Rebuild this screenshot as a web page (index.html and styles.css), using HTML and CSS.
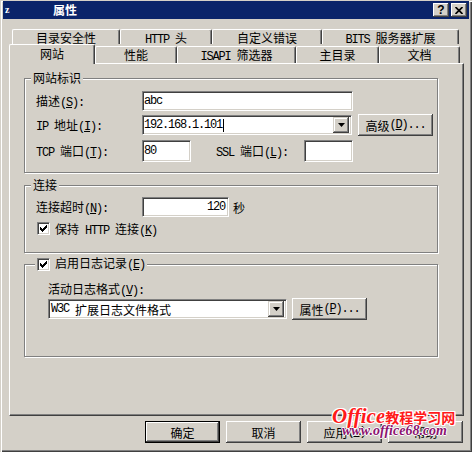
FILE: index.html
```html
<!DOCTYPE html>
<html lang="zh-CN">
<head>
<meta charset="utf-8">
<title>属性</title>
<link rel="stylesheet" href="styles.css">
</head>
<body>
<div class="window">
  <div class="titlebar">
    <span class="ticon">z</span>
    <span class="ttext">属性</span>
    <span class="tbtns">
      <span class="cbtn help">?</span>
      <span class="cbtn close"><svg width="8" height="7" viewBox="0 0 8 7"><path d="M0.5 0 L7.5 7 M7.5 0 L0.5 7" stroke="#000" stroke-width="1.7"/></svg></span>
    </span>
  </div>

  <div class="tabrow back">
    <div class="tab t1">目录安全性</div>
    <div class="tab t2"><span class="en">HTTP </span>头</div>
    <div class="tab t3">自定义错误</div>
    <div class="tab t4"><span class="en">BITS </span>服务器扩展</div>
  </div>
  <div class="tabrow front">
    <div class="tab sel t5">网站</div>
    <div class="tab t6">性能</div>
    <div class="tab t7"><span class="en">ISAPI </span>筛选器</div>
    <div class="tab t8">主目录</div>
    <div class="tab t9">文档</div>
  </div>

  <div class="panel">
    <div class="group g1">
      <div class="legend l1">网站标识</div>
      <div class="row r1">
        <span class="lbl">描述<span class="en">(<u>S</u>):</span></span>
        <div class="field w-desc"><span class="en">abc</span></div>
      </div>
      <div class="row r2">
        <span class="lbl"><span class="en">IP </span>地址<span class="en">(<u>I</u>):</span></span>
        <div class="field combo w-ip"><span class="en">192.168.1.101</span><span class="caret"></span><span class="dd"><svg width="7" height="4" viewBox="0 0 7 4"><path d="M0 0 H7 L3.5 4 Z" fill="#000"/></svg></span></div>
        <div class="btn adv">高级<span class="en">(<u>D</u>)...</span></div>
      </div>
      <div class="row r3">
        <span class="lbl"><span class="en">TCP </span>端口<span class="en">(<u>T</u>):</span></span>
        <div class="field h22 w-port"><span class="en">80</span></div>
        <span class="lbl-ssl"><span class="en">SSL </span>端口<span class="en">(<u>L</u>):</span></span>
        <div class="field h22 w-port"></div>
      </div>
    </div>

    <div class="group g2">
      <div class="legend l2">连接</div>
      <div class="row r4">
        <span class="lbl">连接超时<span class="en">(<u>N</u>):</span></span>
        <div class="field w-time right"><span class="en">120</span></div>
        <span class="sec">秒</span>
      </div>
      <div class="row r5">
        <span class="chk"><svg width="7" height="7" viewBox="0 0 7 7" shape-rendering="crispEdges" fill="#000"><rect x="6" y="0" width="1" height="1"/><rect x="5" y="1" width="2" height="1"/><rect x="0" y="2" width="1" height="1"/><rect x="4" y="2" width="3" height="1"/><rect x="0" y="3" width="2" height="1"/><rect x="3" y="3" width="3" height="1"/><rect x="0" y="4" width="5" height="1"/><rect x="1" y="5" width="3" height="1"/><rect x="2" y="6" width="1" height="1"/></svg></span>
        <span class="chklbl">保持<span class="en"> HTTP </span>连接<span class="en">(<u>K</u>)</span></span>
      </div>
    </div>

    <div class="group g3">
      <div class="legend l3">
        <span class="chk"><svg width="7" height="7" viewBox="0 0 7 7" shape-rendering="crispEdges" fill="#000"><rect x="6" y="0" width="1" height="1"/><rect x="5" y="1" width="2" height="1"/><rect x="0" y="2" width="1" height="1"/><rect x="4" y="2" width="3" height="1"/><rect x="0" y="3" width="2" height="1"/><rect x="3" y="3" width="3" height="1"/><rect x="0" y="4" width="5" height="1"/><rect x="1" y="5" width="3" height="1"/><rect x="2" y="6" width="1" height="1"/></svg></span>
        <span class="chklbl">启用日志记录<span class="en">(<u>E</u>)</span></span>
      </div>
      <div class="fmtlbl">活动日志格式<span class="en">(<u>V</u>):</span></div>
      <div class="row r6">
        <div class="field combo w-fmt"><span class="en">W3C </span>扩展日志文件格式<span class="dd"><svg width="7" height="4" viewBox="0 0 7 4"><path d="M0 0 H7 L3.5 4 Z" fill="#000"/></svg></span></div>
        <div class="btn prop">属性<span class="en">(<u>P</u>)...</span></div>
      </div>
    </div>
  </div>

  <div class="buttons">
    <div class="btn def">确定</div>
    <div class="btn">取消</div>
    <div class="btn">应用<span class="en">(<u>A</u>)</span></div>
    <div class="btn">帮助</div>
  </div>

  <div class="watermark">
    <div class="wm1"><span class="wm-en">Office</span>教程学习网</div>
    <div class="wm2">www.office68.com</div>
  </div>
</div>
</body>
</html>
```

FILE: styles.css
```css
* { box-sizing: border-box; }
html, body { margin: 0; padding: 0; }
body {
  background: #d4d0c8;
  font-family: "Noto Sans CJK SC", "Noto Sans", sans-serif;
  font-size: 12px;
  color: #000;
}
.window {
  position: relative;
  width: 472px;
  height: 452px;
  padding-top: 1px;
  overflow: hidden;
  background: #d4d0c8;
  box-shadow: inset 1px 1px #d4d0c8, inset 2px 2px #fff, inset -1px -1px #404040, inset -2px -2px #808080;
}
.en {
  font-family: "Liberation Mono", "DejaVu Sans Mono", monospace;
  font-size: 12px;
  letter-spacing: -1.2px;
  white-space: pre;
}
u { text-decoration: underline; text-underline-offset: 1px; }

/* title bar */
.titlebar {
  margin: 0 3px;
  height: 18px;
  background: #0a246a;
  color: #fff;
  display: flex;
  align-items: center;
}
.ticon {
  margin-left: 2px;
  width: 48px;
  font-family: "Liberation Serif", serif;
  font-weight: bold;
  font-size: 10px;
  line-height: 10px;
}
.ttext {
  font-weight: bold;
  line-height: 18px;
}
.tbtns {
  margin-left: auto;
  margin-right: 2px;
  display: flex;
  gap: 2px;
}
.cbtn {
  width: 16px;
  height: 14px;
  background: #d4d0c8;
  color: #000;
  display: flex;
  align-items: center;
  justify-content: center;
  box-shadow: inset -1px -1px #404040, inset 1px 1px #fff, inset -2px -2px #808080;
}
.help {
  font-family: "Liberation Sans", sans-serif;
  font-weight: bold;
  font-size: 12px;
  line-height: 14px;
}

/* tabs */
.tabrow {
  display: flex;
  align-items: flex-end;
}
.back {
  margin: 10px 0 0 12px;
  height: 15px;
}
.front {
  margin-left: 9px;
  height: 19px;
}
.tab {
  background: #d4d0c8;
  border-left: 1px solid #fff;
  border-top: 1px solid #fff;
  border-right: 1px solid #404040;
  border-radius: 2px 2px 0 0;
  box-shadow: inset -1px 0 #808080;
  text-align: center;
  white-space: nowrap;
}
.back .tab {
  height: 15px;
  line-height: 16px;
}
.front .tab {
  height: 17px;
  line-height: 16px;
}
.front .tab.sel {
  height: 20px;
  line-height: 17px;
  margin-bottom: -1px;
  position: relative;
  z-index: 1;
}
.t1 { width: 108px; }
.t2 { width: 92px; }
.t3 { width: 110px; }
.t4 { width: 137px; }
.t5 { width: 86px; }
.t6 { width: 82px; }
.t7 { width: 119px; }
.t8 { width: 83px; }
.t9 { width: 81px; }

/* panel */
.panel {
  margin-left: 9px;
  width: 455px;
  height: 353px;
  border-top: 1px solid #fff;
  border-left: 1px solid #fff;
  border-right: 1px solid #404040;
  border-bottom: 1px solid #404040;
  box-shadow: inset -1px -1px #808080;
  padding-left: 14px;
}
.group {
  width: 414px;
  border: 1px solid #808080;
  box-shadow: inset 1px 1px #fff, 1px 1px #fff;
}
.g1 { margin-top: 14px; height: 95px; }
.g2 { margin-top: 12px; height: 68px; }
.g3 { margin-top: 11px; height: 93px; }
.legend {
  display: flex;
  align-items: center;
  width: max-content;
  height: 14px;
  line-height: 14px;
  margin-top: -8px;
  padding: 0 2px;
  background: #d4d0c8;
}
.l1, .l2 { margin-left: 6px; }
.l3 { margin-left: 10px; }

.row {
  display: flex;
  align-items: center;
  padding-left: 11px;
}
.r1 { margin-top: 6px; height: 20px; }
.r2 { margin-top: 3px; height: 22px; }
.r3 { margin-top: 4px; height: 22px; }
.r4 { margin-top: 5px; height: 20px; }
.r5 { margin-top: 5px; height: 13px; padding-left: 12px; }
.r6 { margin-top: 2px; height: 22px; padding-left: 23px; }
.lbl { width: 106px; white-space: nowrap; }
.lbl-ssl { margin-left: 25px; width: 88px; white-space: nowrap; }

.field {
  height: 20px;
  background: #fff;
  border-top: 1px solid #808080;
  border-left: 1px solid #808080;
  border-right: 1px solid #fff;
  border-bottom: 1px solid #fff;
  box-shadow: inset 1px 1px #404040, inset -1px -1px #d4d0c8;
  padding: 0 2px 0 1px;
  display: flex;
  align-items: center;
  white-space: nowrap;
}
.h22 { height: 22px; }
.w-desc { width: 211px; }
.w-ip { width: 210px; }
.w-port { width: 49px; }
.w-time { width: 87px; }
.w-fmt { width: 239px; padding-left: 2px; }
.right { justify-content: flex-end; padding-right: 3px; }
.combo { padding-right: 2px; }
.caret {
  display: inline-block;
  width: 1px;
  height: 13px;
  background: #000;
  margin-left: 1px;
}
.dd {
  margin-left: auto;
  width: 16px;
  height: 16px;
  background: #d4d0c8;
  display: flex;
  align-items: center;
  justify-content: center;
  box-shadow: inset -1px -1px #404040, inset 1px 1px #d4d0c8, inset -2px -2px #808080, inset 2px 2px #fff;
}
.sec { margin-left: 4px; }

.chk {
  width: 13px;
  height: 13px;
  flex: none;
  background: #fff;
  border-top: 1px solid #808080;
  border-left: 1px solid #808080;
  border-right: 1px solid #fff;
  border-bottom: 1px solid #fff;
  box-shadow: inset 1px 1px #404040, inset -1px -1px #d4d0c8;
  display: flex;
  align-items: center;
  justify-content: center;
}
.chk svg { display: block; }
.chklbl { margin-left: 5px; white-space: nowrap; }
.fmtlbl {
  margin: 11px 0 0 23px;
  height: 14px;
  line-height: 14px;
}

.btn {
  width: 75px;
  height: 22px;
  background: #d4d0c8;
  display: flex;
  align-items: center;
  justify-content: center;
  white-space: nowrap;
  box-shadow: inset -1px -1px #404040, inset 1px 1px #fff, inset -2px -2px #808080;
}
.btn.def {
  border: 1px solid #000;
}
.adv { margin-left: 6px; }
.prop { margin-left: 5px; }

.buttons {
  display: flex;
  gap: 6px;
  margin: 5px 0 0 145px;
}

/* watermark overlay */
.watermark {
  position: absolute;
  left: 332px;
  top: 406px;
  pointer-events: none;
}
.wm1 {
  color: #ff1a1a;
  font-weight: bold;
  font-size: 14px;
  line-height: 20px;
  white-space: nowrap;
  text-shadow: 1px 0 #fff, -1px 0 #fff, 0 1px #fff, 0 -1px #fff, 1px 1px #fff, -1px -1px #fff, 1px -1px #fff, -1px 1px #fff;
}
.wm-en {
  font-family: "Liberation Serif", serif;
  font-style: italic;
  font-size: 21px;
}
.wm2 {
  margin: -4px 0 0 10px;
  color: #8c1470;
  font-family: "Liberation Serif", serif;
  font-style: italic;
  font-weight: bold;
  font-size: 14px;
  line-height: 16px;
  text-shadow: 1px 0 #fff, -1px 0 #fff, 0 1px #fff, 0 -1px #fff;
}
```
